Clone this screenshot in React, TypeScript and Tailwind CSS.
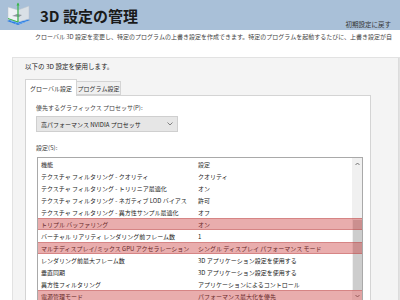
const rows: { name: string; value: string; mark?: boolean }[] = [
  { name: "テクスチャ フィルタリング - クオリティ", value: "クオリティ" },
  { name: "テクスチャ フィルタリング - トリリニア最適化", value: "オン" },
  { name: "テクスチャ フィルタリング - ネガティブ LOD バイアス", value: "許可" },
  { name: "テクスチャ フィルタリング - 異方性サンプル最適化", value: "オフ" },
  { name: "トリプル バッファリング", value: "オン", mark: true },
  { name: "バーチャル リアリティ レンダリング前フレーム数", value: "1" },
  { name: "マルチディスプレイ/ミックス GPU アクセラレーション", value: "シングル ディスプレイ パフォーマンス モード", mark: true },
  { name: "レンダリング前最大フレーム数", value: "3D アプリケーション設定を使用する" },
  { name: "垂直同期", value: "3D アプリケーション設定を使用する" },
  { name: "異方性フィルタリング", value: "アプリケーションによるコントロール" },
  { name: "電源管理モード", value: "パフォーマンス最大化を優先", mark: true },
];

function NvIcon() {
  return (
    <svg width="26" height="26" viewBox="0 0 26 26">
      <polygon points="2,19 13,23 25,18 14,15" fill="#2f7ee0" />
      <path d="M5,18 L16,22 M8,17 L19,21 M11,16 L22,19.5 M6,20 L17,16 M10,21.5 L20,17" stroke="#8cc2ff" strokeWidth="0.6" />
      <polygon points="3,5 13,8 13,20 3,17" fill="#eef1f4" stroke="#b9c3cc" strokeWidth="0.5" />
      <polygon points="13,8 24,4 24,17 13,20" fill="#d9e0e6" stroke="#b9c3cc" strokeWidth="0.5" />
      <path d="M7,14 L12,12 L17,13 L14,15 Z" fill="#8e979f" />
      <line x1="13" y1="1.5" x2="13" y2="20" stroke="#39b54a" strokeWidth="1.2" />
      <line x1="13" y1="20" x2="3" y2="16.5" stroke="#39b54a" strokeWidth="1" />
      <polygon points="13,0.5 11.5,3.5 14.5,3.5" fill="#39b54a" />
    </svg>
  );
}

export default function App() {
  return (
    <div className="w-[400px] h-[300px] overflow-hidden bg-white text-[#222] font-['Noto_Sans_CJK_JP','Noto_Sans',sans-serif]">
      <div className="flex h-[30px] bg-[#a9c0d8] pl-[5px] pr-[9px]">
        <div className="flex items-center gap-[9px]">
          <NvIcon />
          <h1 className="text-[15px] font-bold leading-none text-[#1a1a1a]">3D 設定の管理</h1>
        </div>
        <span className="ml-auto self-end pb-[3px] text-[6.5px] leading-none text-[#333]">初期設定に戻す</span>
      </div>

      <p className="mt-[3px] whitespace-nowrap pl-[35px] text-[6px] leading-[8px] text-[#444]">
        クローバル 3D 設定を変更し、特定のプログラムの上書き設定を作成できます。特定のプログラムを起動するたびに、上書き設定が自
      </p>

      <div className="ml-[12px] mt-[16px] flex h-[260px] border border-[#e2e2e2] bg-[#f4f4f4]">
        <div className="flex w-[358px] flex-col pl-[12px] pt-[4px]">
          <p className="text-[6.5px] leading-[9px] text-[#222]">以下の 3D 設定を使用します。</p>

          <div className="mt-[8px] flex items-end">
            <div className="relative z-10 -mb-px flex h-[17px] w-[52px] items-center justify-center border border-b-0 border-[#d4d4d4] bg-white text-[6px] text-[#333]">
              グローバル設定
            </div>
            <div className="flex h-[14px] w-[44px] items-center justify-center border border-l-0 border-[#d4d4d4] bg-[#f0f0f0] text-[6px] text-[#333]">
              プログラム設定
            </div>
          </div>

          <div className="flex-1 border border-[#d4d4d4] bg-white pl-[10px] pt-[8px]">
            <p className="text-[6px] leading-[8px] text-[#444]">優先するグラフィックス プロセッサ(P):</p>
            <div className="mt-[4px] flex h-[16px] w-[142px] items-center border border-[#cfcfcf] bg-[#e6e6e6] pl-[4px] pr-[4px]">
              <span className="text-[6px] text-[#222]">高パフォーマンス NVIDIA プロセッサ</span>
              <svg className="ml-auto" width="6" height="4" viewBox="0 0 6 4">
                <path d="M0.5,0.5 L3,3 L5.5,0.5" stroke="#555" strokeWidth="0.7" fill="none" />
              </svg>
            </div>

            <p className="mt-[12px] text-[6px] leading-[8px] text-[#444]">設定(S):</p>

            <div className="relative ml-[1px] mt-[5px] w-[326px] border border-[#a9a9a9] bg-white">
              <div className="absolute right-0 top-0 bottom-0 z-10 flex w-[10px] flex-col items-center bg-[#f0f0f0]">
                <svg className="mt-[4px]" width="5" height="4" viewBox="0 0 5 4">
                  <path d="M0.5,3 L2.5,1 L4.5,3" stroke="#555" strokeWidth="0.8" fill="none" />
                </svg>
                <div className="mt-[54px] h-[70px] w-[9px] bg-[#cdcdcd]" />
                <svg className="mt-[4px]" width="5" height="4" viewBox="0 0 5 4">
                  <path d="M0.5,1 L2.5,3 L4.5,1" stroke="#555" strokeWidth="0.8" fill="none" />
                </svg>
              </div>
              <div className="flex h-[12px] items-center pl-[3px] text-[6px] text-[#333]">
                <span className="w-[157px]">機能</span>
                <span>設定</span>
              </div>
              {rows.map((r) => (
                <div key={r.name} className="relative flex h-[12px] items-center whitespace-nowrap pl-[3px] text-[6px] text-[#222]">
                  <span className="w-[157px]">{r.name}</span>
                  <span>{r.value}</span>
                  {r.mark && (
                    <div className="absolute inset-0 z-20 border-y border-[#b84848]/40 bg-[#c83232]/40" />
                  )}
                </div>
              ))}
            </div>
          </div>
        </div>
        <div className="ml-auto w-px bg-[#dcdcdc]" />
      </div>
    </div>
  );
}
